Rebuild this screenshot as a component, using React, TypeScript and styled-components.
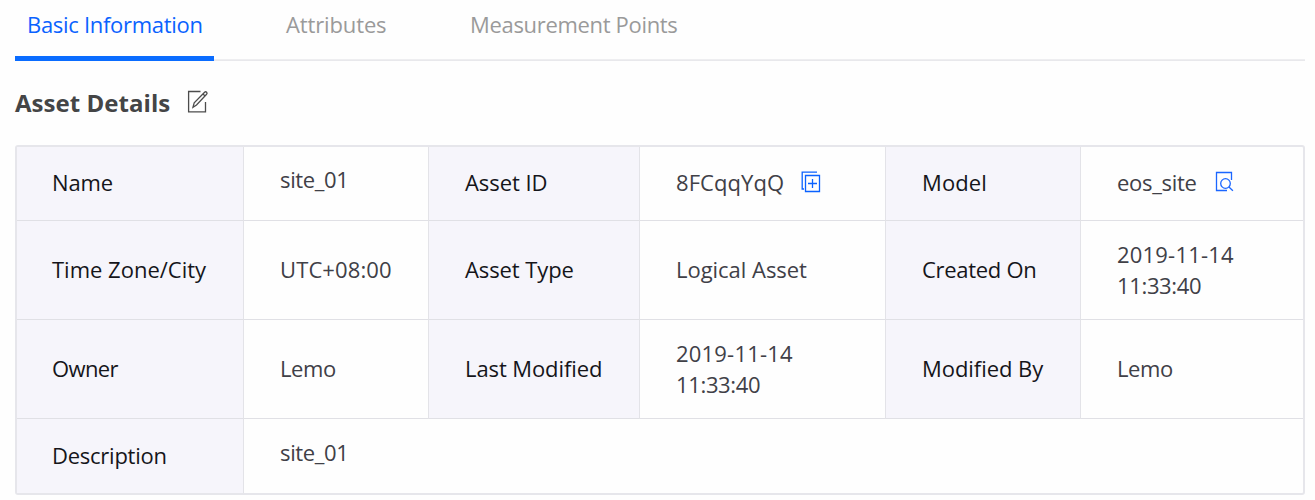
import React from "react";
import styled, { createGlobalStyle } from "styled-components";

const GlobalStyle = createGlobalStyle`
  *, *::before, *::after { box-sizing: border-box; }
  body {
    margin: 0;
    background: #fefefe;
    font-family: "Open Sans", "Noto Sans", sans-serif;
    font-size: 22px;
    line-height: 31px;
  }
`;

const Page = styled.main`
  width: 1315px;
  height: 500px;
  padding: 0 10px 0 15px;
  overflow: hidden;
`;

const Tabs = styled.nav`
  display: flex;
  gap: 60px;
  height: 61px;
  background: linear-gradient(#f1f1f3, #e5e5e9) bottom / 100% 2px no-repeat;
`;

const Tab = styled.button<{ $active?: boolean; $width: number; $track: number }>`
  flex: none;
  width: ${(p) => p.$width}px;
  height: 61px;
  margin: 0;
  padding: 9px 0 16px 12px;
  border: 0;
  border-bottom: 5px solid ${(p) => (p.$active ? "#0a6cff" : "transparent")};
  background: none;
  color: ${(p) => (p.$active ? "#0a62ff" : "#9a9a9a")};
  font: inherit;
  letter-spacing: ${(p) => p.$track}px;
  text-align: left;
  white-space: nowrap;
`;

const Heading = styled.header`
  display: flex;
  align-items: center;
  gap: 17px;
  height: 84px;
`;

const Title = styled.h2`
  margin: 0;
  color: #444546;
  font-size: 24px;
  font-weight: 700;
  letter-spacing: 0.05px;
  line-height: 32px;
  white-space: nowrap;
`;

const Details = styled.dl`
  display: grid;
  grid-template-columns: 227px 185px 211px 246px 195px 222px;
  grid-template-rows: 74px 99px 99px 74px;
  width: 1290px;
  height: 350px;
  margin: 0;
  border: 2px solid #e6e6eb;
  border-radius: 3px;
`;

const Cell = styled.div<{ $track?: number; $last?: boolean; $bottom?: boolean }>`
  display: flex;
  align-items: center;
  margin: 0;
  padding: 0 0 2px 36px;
  border-right: ${(p) => (p.$last ? 0 : 1)}px solid #e3e3e8;
  border-bottom: ${(p) => (p.$bottom ? 0 : 1)}px solid #e0e0e5;
  letter-spacing: ${(p) => p.$track ?? 0}px;
  white-space: nowrap;
`;

const Label = styled(Cell).attrs({ as: "dt" })<{ $first?: boolean }>`
  padding-left: ${(p) => (p.$first ? 35 : 36)}px;
  background: #f6f5fb;
  color: #15151a;
`;

const Value = styled(Cell).attrs({ as: "dd" })<{ $raised?: boolean; $wide?: boolean }>`
  grid-column: ${(p) => (p.$wide ? "span 5" : "auto")};
  padding-bottom: ${(p) => (p.$raised ? 8 : 2)}px;
  color: #404047;
`;

const Stamp = styled.time`
  display: flex;
  flex-direction: column;
  margin-bottom: -2px;
  letter-spacing: 0.2px;
`;

const Clock = styled.span`
  letter-spacing: -0.35px;
`;

const Icon = styled.svg<{ $gap?: number; $lift?: number }>`
  flex: none;
  display: block;
  margin-left: ${(p) => p.$gap ?? 0}px;
  margin-bottom: ${(p) => p.$lift ?? 0}px;
  fill: none;
`;

const EditIcon = () => (
  <Icon width="22" height="24" viewBox="0 0 22 24" stroke="#4c4c4c" strokeWidth="1.3" $lift={2}>
    <path d="M13.500 1.500H1.600v20.400h16.900V12" />
    <path d="M6 17.200l1.200-4.300L17.600 2.300c.6-.6 1.400-.6 2 0s.6 1.400 0 2L9.500 15z M16 4l2.100 2" />
  </Icon>
);

const CopyIcon = () => (
  <Icon width="20" height="22" viewBox="0 0 20 22" stroke="#0a62ff" strokeWidth="1.300" $gap={17} $lift={2}>
    <path d="M16 1.200H1.200V18H3" />
    <path d="M4.500 4.500h14v16h-14z M11.500 8v9 M7 12.500h9" />
  </Icon>
);

const ViewIcon = () => (
  <Icon width="19" height="21" viewBox="0 0 19 21" stroke="#1b66ff" strokeWidth="1.300" $gap={18} $lift={2}>
    <path d="M16.500 9V1.500H1.500v18H12" />
    <circle cx="10.500" cy="12.500" r="4.800" />
    <path d="M13.900 16l4 3.800" />
  </Icon>
);

const Timestamp = () => (
  <Stamp dateTime="2019-11-14T11:33:40">
    <span>2019-11-14</span>
    <Clock>11:33:40</Clock>
  </Stamp>
);

export default function App() {
  return (
    <Page>
      <GlobalStyle />
      <Tabs>
        <Tab $active $width={199} $track={-0.3}>Basic Information</Tab>
        <Tab $width={124} $track={-0.13}>Attributes</Tab>
        <Tab $width={240} $track={-0.32}>Measurement Points</Tab>
      </Tabs>
      <Heading>
        <Title>Asset Details</Title>
        <EditIcon />
      </Heading>
      <Details>
        <Label $first $track={-0.1}>Name</Label>
        <Value $raised $track={-0.35}>site_01</Value>
        <Label $track={-0.05}>Asset ID</Label>
        <Value $track={0.08}>8FCqqYqQ<CopyIcon /></Value>
        <Label $track={0.1}>Model</Label>
        <Value $last $track={-0.3}>eos_site<ViewIcon /></Value>

        <Label $first>Time Zone/City</Label>
        <Value $track={0.12}>UTC+08:00</Value>
        <Label $track={-0.1}>Asset Type</Label>
        <Value $track={-0.03}>Logical Asset</Value>
        <Label $track={-0.3}>Created On</Label>
        <Value $last><Timestamp /></Value>

        <Label $first $track={-0.6}>Owner</Label>
        <Value $track={-0.4}>Lemo</Value>
        <Label $track={-0.1}>Last Modified</Label>
        <Value><Timestamp /></Value>
        <Label $track={-0.05}>Modified By</Label>
        <Value $last $track={-0.4}>Lemo</Value>

        <Label $first $bottom $track={-0.25}>Description</Label>
        <Value $bottom $last $wide $raised $track={-0.35}>site_01</Value>
      </Details>
    </Page>
  );
}
